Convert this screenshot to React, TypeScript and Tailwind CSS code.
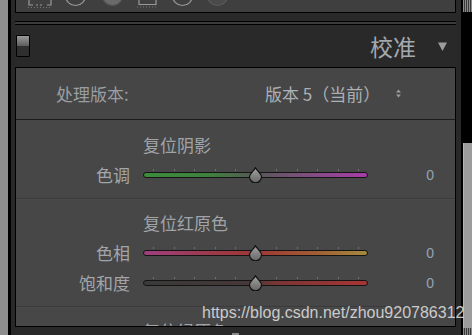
import { useId } from "react";

const cjk = "font-['Noto_Sans_CJK_SC','Noto_Sans',sans-serif]";

type SliderDef = { label: string; track: string };
type SectionDef = { title: string; sliders: SliderDef[]; top: string };

const sections: SectionDef[] = [
  {
    title: "复位阴影",
    top: "pt-[10px]",
    sliders: [
      {
        label: "色调",
        track:
          "bg-[linear-gradient(90deg,#3c8b3c_0%,#3f7f3f_30%,#575757_50%,#7a507a_70%,#a83ca8_100%)]",
      },
    ],
  },
  {
    title: "复位红原色",
    top: "pt-[8px]",
    sliders: [
      {
        label: "色相",
        track:
          "bg-[linear-gradient(90deg,#9e3f7e_0%,#9c3a4a_30%,#9e3636_50%,#a05a34_75%,#a58a3e_100%)]",
      },
      {
        label: "饱和度",
        track:
          "bg-[linear-gradient(90deg,#3a3a3a_0%,#453838_45%,#7a3535_60%,#a83535_100%)]",
      },
    ],
  },
  { title: "复位绿原色", top: "pt-[8px]", sliders: [] },
];

function Thumb() {
  const id = useId();
  return (
    <svg width="15" height="16" viewBox="0 0 15 16" className="absolute left-[105px] top-0">
      <defs>
        <linearGradient id={id} x1="0" y1="0" x2="0" y2="1">
          <stop offset="0" stopColor="#a4a4a4" />
          <stop offset="1" stopColor="#666" />
        </linearGradient>
      </defs>
      <path
        d="M7.5 0.8 C8.7 3.4 13.5 6.6 13.5 9.8 A6 6 0 0 1 1.5 9.8 C1.5 6.6 6.3 3.4 7.5 0.8 Z"
        fill={`url(#${id})`}
        stroke="#111"
        strokeWidth="1.2"
      />
    </svg>
  );
}

function Slider({ label, track }: SliderDef) {
  return (
    <div className="flex h-[30px] items-center">
      <span className="w-[114px] text-right text-[17px] text-[#a2a6aa]">{label}</span>
      <div className="relative ml-[13px] h-[16px] w-[225px]">
        <div className="absolute left-[10px] top-[2px] flex w-[206px] justify-between">
          {Array.from({ length: 11 }).map((_, i) => (
            <span key={i} className="h-[2px] w-px bg-[#707070]" />
          ))}
        </div>
        <div className={`absolute left-0 right-0 top-[5px] h-[6px] rounded-full border border-[#141414] ${track}`} />
        <Thumb />
      </div>
      <span className="w-[66px] text-right font-['Liberation_Sans',sans-serif] text-[14px] text-[#93a3b3]">
        0
      </span>
    </div>
  );
}

function TopIcons() {
  return (
    <svg width="439" height="12" viewBox="0 0 439 12" className="block">
      <g fill="none" stroke="#9a9a9a" strokeWidth="1.2">
        <path d="M13 -2 V5 H17 M31 5 H35 V-2" />
        <path d="M20 5 H28" strokeDasharray="2 2" />
        <path d="M12 7.5 H36" strokeDasharray="1 2" stroke="#777" />
        <circle cx="59.5" cy="-4.5" r="10" />
        <circle cx="96.5" cy="-4.5" r="10" fill="#6a6a6a" stroke="#555" />
        <path d="M123 -2 V4.5 H140 V-2" />
        <path d="M121 7 H142" strokeDasharray="1 2" stroke="#777" />
        <circle cx="166.5" cy="-4.5" r="10" />
        <circle cx="201.5" cy="-4.5" r="10" stroke="#5a5a5a" fill="#4a4a4a" />
      </g>
    </svg>
  );
}

export default function App() {
  return (
    <div className={`relative flex h-[335px] w-[472px] overflow-hidden bg-black ${cjk}`}>
      <div className="w-[8px] bg-[#8e8e8e]" />
      <div className="w-[3px] bg-black" />

      <div className="flex w-[450px] flex-col bg-[#292929] pl-[4px] pr-[5px]">
        <div className="h-[13px] overflow-hidden border-x border-b border-black bg-[#3f3f3f]">
          <TopIcons />
        </div>
        <div className="h-[8px]" />
        <div className="h-[4px] border-y border-black bg-[#3b3b3b]" />

        <div className="flex h-[42px] items-center">
          <div className="ml-px flex h-[22px] w-[14px] flex-col overflow-hidden rounded-[1px] border border-black">
            <div className="h-1/2 bg-[linear-gradient(180deg,#9a9a9a,#5c5c5c)]" />
            <div className="h-1/2 bg-[#2f2f2f]" />
          </div>
          <div className="flex-1" />
          <span className="text-[23px] leading-none text-[#a3a9ae]">校准</span>
          <svg width="9" height="9" viewBox="0 0 9 9" className="ml-[22px] mr-[9px]">
            <path d="M0 0.5 H9 L4.5 9 Z" fill="#9c9c9c" />
          </svg>
        </div>

        <div className="h-[260px] overflow-hidden border border-black bg-[#474747]">
          <div className="flex h-[51px] items-center bg-[#464646] pl-[40px] text-[17px]">
            <span className="w-[209px] text-[#9a9ea2]">处理版本:</span>
            <span className="text-[#aab0b5]">版本 5（当前）</span>
            <svg width="5" height="9" viewBox="0 0 5 9" className="ml-[16px]">
              <path d="M0 3.5 L2.5 0.5 L5 3.5 Z M0 5.5 L2.5 8.5 L5 5.5 Z" fill="#9c9c9c" />
            </svg>
          </div>
          <div className="h-px bg-[#1c1c1c]" />

          {sections.map((s, i) => (
            <div key={s.title}>
              {i > 0 && (
                <div className="flex h-[2px] flex-col">
                  <div className="h-px bg-[#3a3a3a]" />
                  <div className="h-px bg-[#4b4b4b]" />
                </div>
              )}
              <div className={`${s.top} pb-[8px]`}>
                <div className="flex h-[30px] items-center pl-[127px] text-[17px] text-[#a0a4a8]">
                  {s.title}
                </div>
                {s.sliders.map((sl) => (
                  <Slider key={sl.label} {...sl} />
                ))}
              </div>
            </div>
          ))}
        </div>

        <div className="flex h-[8px] items-end justify-center">
          <div className="h-[2px] w-[7px] bg-[#8a8a8a]" />
        </div>
      </div>

      <div className="w-[2px] bg-black" />
      <div className="flex w-[9px] flex-col">
        <div className="h-[12px] bg-[repeating-linear-gradient(90deg,#8c8c8c_0_1px,#3a3a3a_1px_2px)]" />
        <div className="h-[131px] bg-black" />
        <div className="h-[185px] border-l border-[#b4b4b4] bg-[#9c9c9c]" />
        <div className="flex-1 bg-[repeating-linear-gradient(90deg,#8c8c8c_0_1px,#3a3a3a_1px_2px)]" />
      </div>

      <span className="absolute left-[202px] top-[304px] font-['Liberation_Sans',Arial,sans-serif] text-[16px] leading-[18px] text-[#e4e4e4d9]">
        https://blog.csdn.net/zhou920786312
      </span>
    </div>
  );
}
